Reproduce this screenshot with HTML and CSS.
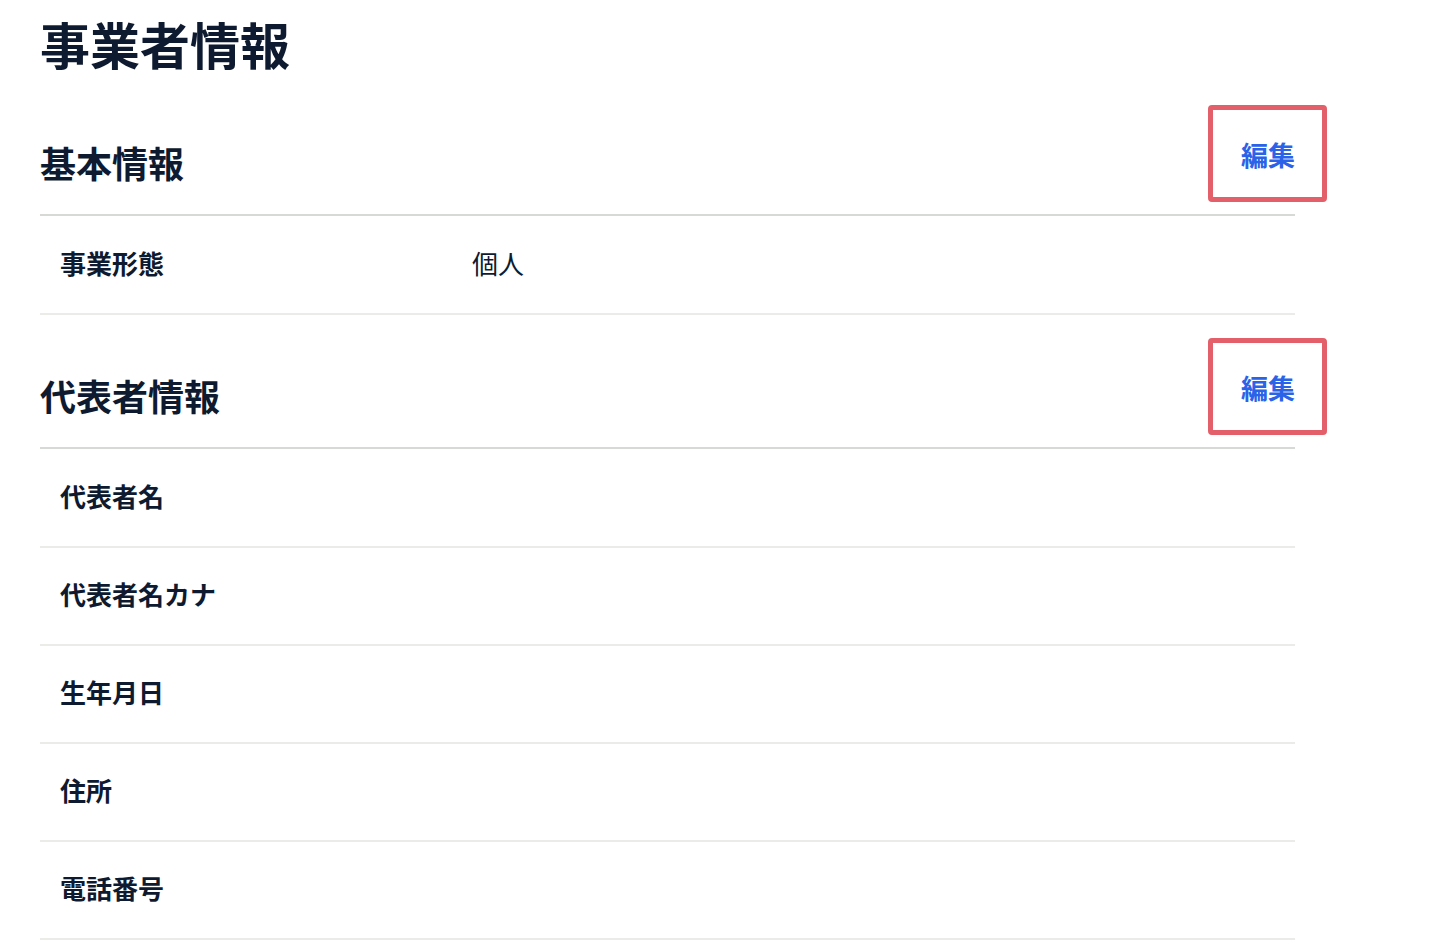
FILE: index.html
```html
<html>
  <head>
    <meta charset="utf-8">
    <link rel="stylesheet" href="styles.css">
  </head>
  <body>
    <div class="page">
      <h1>事業者情報</h1>

      <div class="section">
        <div class="section-header">
          <h2>基本情報</h2>
          <a class="edit" href="#">編集</a>
        </div>
        <div class="row">
          <div class="label">事業形態</div>
          <div class="value">個人</div>
        </div>
      </div>

      <div class="section">
        <div class="section-header">
          <h2>代表者情報</h2>
          <a class="edit" href="#">編集</a>
        </div>
        <div class="row">
          <div class="label">代表者名</div>
          <div class="value"></div>
        </div>
        <div class="row">
          <div class="label">代表者名カナ</div>
          <div class="value"></div>
        </div>
        <div class="row">
          <div class="label">生年月日</div>
          <div class="value"></div>
        </div>
        <div class="row">
          <div class="label">住所</div>
          <div class="value"></div>
        </div>
        <div class="row">
          <div class="label">電話番号</div>
          <div class="value"></div>
        </div>
      </div>
    </div>
  </body>
</html>
```

FILE: styles.css
```css
body {
  margin: 0;
  background: #ffffff;
  color: #0e1a2f;
  font-family: "Noto Sans CJK JP", "Noto Sans", sans-serif;
}

.page {
  width: 1255px;
  margin-left: 40px;
}

h1 {
  margin: 18px 0 14px;
  font-size: 50px;
  line-height: 50px;
  font-weight: bold;
}

.section-header {
  display: flex;
  justify-content: space-between;
  align-items: flex-start;
  padding: 62px 0 34px;
  border-bottom: 2px solid #d6d9d4;
}

h2 {
  margin: 0;
  font-size: 36px;
  line-height: 36px;
  font-weight: bold;
}

/* red highlight box around the edit link */
.edit {
  position: relative;
  margin-top: -3px;
  font-size: 27px;
  line-height: 27px;
  font-weight: bold;
  color: #2a62e8;
  text-decoration: none;
}

.edit::after {
  content: "";
  position: absolute;
  top: -36px;
  bottom: -34px;
  left: -33px;
  right: -32px;
  border: 5px solid #e3606a;
  border-radius: 4px;
}

.row {
  display: grid;
  grid-template-columns: 412px 1fr;
  padding: 33px 20px 37px;
  border-bottom: 2px solid #ebebe7;
  font-size: 26px;
  line-height: 26px;
}

.section-header + .row {
  padding-top: 34px;
  padding-bottom: 37px;
}

.label {
  font-weight: bold;
}

.value {
  font-weight: normal;
}
```
